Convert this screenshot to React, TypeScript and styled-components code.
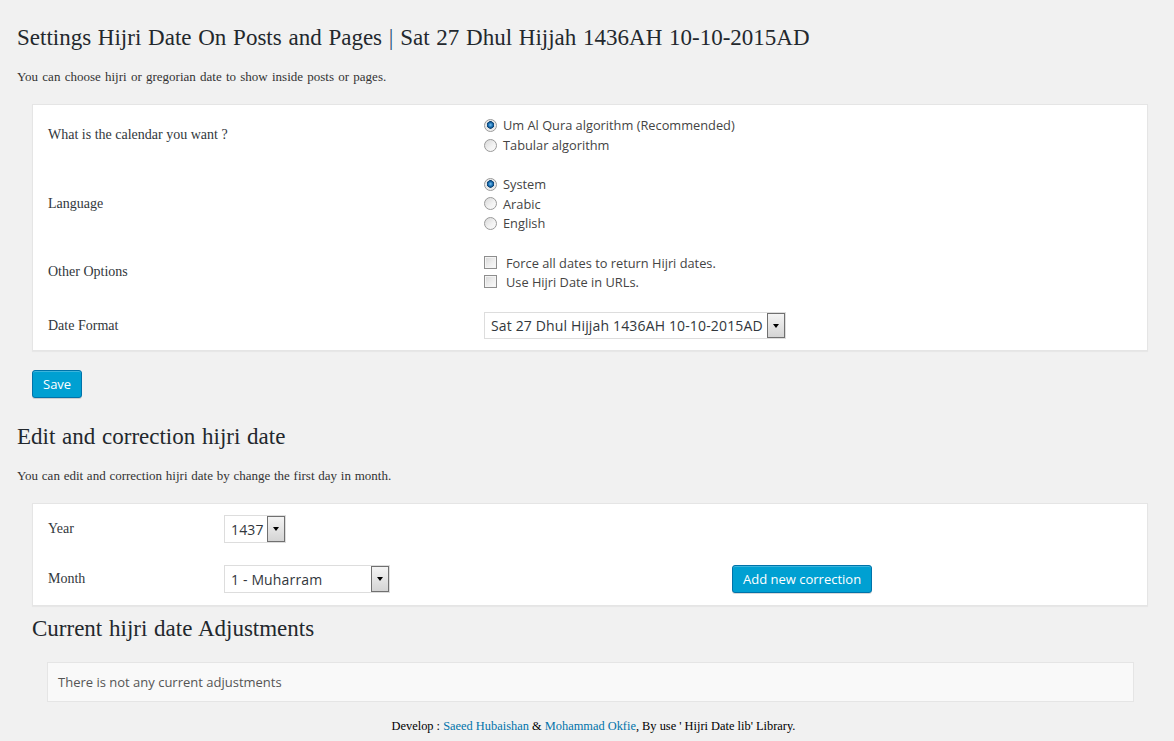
import React from "react";
import styled, { createGlobalStyle } from "styled-components";

// WordPress-style admin settings page for the hijri date plugin

const GlobalStyle = createGlobalStyle`
    html, body {
        margin: 0;
        padding: 0;
        background: #f1f1f1;
    }
    body {
        font-family: "Liberation Serif", "Times New Roman", serif;
        color: #23282d;
    }
`;

const Page = styled.div`
    padding: 23px 26px 20px 17px;
    min-height: 741px;
    box-sizing: border-box;
`;

const Title = styled.h2<{ indent?: number; top?: number }>`
    margin: ${({ top }) => top ?? 0}px 0 0 ${({ indent }) => indent ?? 0}px;
    font-weight: normal;
    font-size: 23px;
    line-height: 29px;
    word-spacing: 1px;
    color: #23282d;
`;

const Pipe = styled.span`
    color: #2a4f78;
`;

const Description = styled.p<{ spacing?: number }>`
    margin: 16px 0 0;
    font-size: 13px;
    line-height: 18px;
    word-spacing: ${({ spacing }) => spacing ?? 1}px;
    color: #333;
`;

const Card = styled.div<{ top: number }>`
    margin: ${({ top }) => top}px 0 0 15px;
    background: #fff;
    border: 1px solid #e5e5e5;
    box-shadow: 0 1px 1px rgba(0, 0, 0, 0.04);
`;

const SettingsTable = styled.div`
    padding: 0 15px;
`;

const SettingRow = styled.div<{ pad: string }>`
    display: grid;
    grid-template-columns: 436px 1fr;
    align-items: center;
    padding: ${({ pad }) => pad};
`;

const Label = styled.div`
    font-size: 14px;
    color: #32373c;
`;

const OptionList = styled.div`
    display: flex;
    flex-direction: column;
`;

const Option = styled.label<{ lineHeight: number }>`
    display: flex;
    align-items: center;
    height: ${({ lineHeight }) => lineHeight}px;
    font-family: "Open Sans", "Noto Sans", sans-serif;
    font-size: 12.8px;
    color: #444;
`;

const Radio = styled.span<{ checked?: boolean }>`
    width: 11px;
    height: 11px;
    border-radius: 50%;
    border: 1px solid #9a9a9a;
    margin-right: 6px;
    box-sizing: content-box;
    background: ${({ checked }) =>
        checked
            ? "radial-gradient(circle at 50% 45%, #7ec4ef 0, #1f74b8 2px, #0b3f6e 3.5px, #e8e8e8 4px, #f6f6f6 100%)"
            : "linear-gradient(135deg, #d8d8d8 0%, #f3f3f3 60%, #fafafa 100%)"};
`;

const Checkbox = styled.span`
    width: 11px;
    height: 11px;
    border: 1px solid #8e8e8e;
    margin-right: 9px;
    box-sizing: content-box;
    background: linear-gradient(135deg, #d6d6d6 0%, #eeeeee 55%, #fbfbfb 100%);
    box-shadow: inset 0 0 0 1px #f4f4f4;
`;

const SelectBox = styled.div<{ width: number; height: number }>`
    display: flex;
    align-items: stretch;
    width: ${({ width }) => width}px;
    height: ${({ height }) => height}px;
    border: 1px solid #ddd;
    box-sizing: border-box;
    background: #fff;
    font-family: "Open Sans", "Noto Sans", sans-serif;
    font-size: 14px;
    letter-spacing: 0.15px;
    color: #32373c;
`;

const SelectValue = styled.div`
    flex: 1;
    display: flex;
    align-items: center;
    padding-left: 6px;
    white-space: nowrap;
    overflow: hidden;
`;

const SelectArrow = styled.div`
    width: 16px;
    border: 1px solid #707070;
    background: linear-gradient(#f4f4f4, #d4d4d4);
    display: flex;
    align-items: center;
    justify-content: center;

    &::after {
        content: "";
        border-left: 3.5px solid transparent;
        border-right: 3.5px solid transparent;
        border-top: 4px solid #000;
    }
`;

const Button = styled.button<{ top?: number; left?: number }>`
    justify-self: start;
    margin: ${({ top }) => top ?? 0}px 0 0 ${({ left }) => left ?? 0}px;
    height: 28px;
    padding: 0 10px;
    background: #00a0d2;
    border: 1px solid #0073aa;
    border-radius: 3px;
    box-shadow: inset 0 1px 0 rgba(120, 200, 230, 0.5), 0 1px 0 rgba(0, 0, 0, 0.15);
    color: #fff;
    font-family: "Open Sans", "Noto Sans", sans-serif;
    font-size: 13px;
    cursor: pointer;
`;

const CorrectionTable = styled.div`
    padding: 11px 15px 12px;
    display: grid;
    grid-template-columns: 176px 508px auto;
    row-gap: 22px;
    align-items: center;
`;

const EmptyBox = styled.div`
    margin: 19px 14px 0 30px;
    height: 40px;
    box-sizing: border-box;
    display: flex;
    align-items: center;
    padding-left: 10px;
    background: #f9f9f9;
    border: 1px solid #e5e5e5;
    font-family: "Open Sans", "Noto Sans", sans-serif;
    font-size: 13px;
    color: #555;
`;

const Footer = styled.div`
    margin-top: 15px;
    padding-left: 22px;
    text-align: center;
    font-size: 12.4px;
    line-height: 18px;
    color: #000;

    a {
        color: #0073aa;
        text-decoration: none;
    }
`;

const Select: React.FC<{ value: string; width: number; height: number }> = ({
    value,
    width,
    height,
}) => (
    <SelectBox width={width} height={height}>
        <SelectValue>{value}</SelectValue>
        <SelectArrow />
    </SelectBox>
);

const App: React.FC = () => {
    return (
        <>
            <GlobalStyle />
            <Page>
                <Title>
                    Settings Hijri Date On Posts and Pages <Pipe>|</Pipe> Sat 27 Dhul
                    Hijjah 1436AH 10-10-2015AD
                </Title>
                <Description>
                    You can choose hijri or gregorian date to show inside posts or pages.
                </Description>

                <Card top={18}>
                    <SettingsTable>
                        <SettingRow pad="10px 0">
                            <Label>What is the calendar you want ?</Label>
                            <OptionList>
                                <Option lineHeight={20}>
                                    <Radio checked />
                                    Um Al Qura algorithm (Recommended)
                                </Option>
                                <Option lineHeight={20}>
                                    <Radio />
                                    Tabular algorithm
                                </Option>
                            </OptionList>
                        </SettingRow>
                        <SettingRow pad="9px 0 10px">
                            <Label>Language</Label>
                            <OptionList>
                                <Option lineHeight={20}>
                                    <Radio checked />
                                    System
                                </Option>
                                <Option lineHeight={19}>
                                    <Radio />
                                    Arabic
                                </Option>
                                <Option lineHeight={20}>
                                    <Radio />
                                    English
                                </Option>
                            </OptionList>
                        </SettingRow>
                        <SettingRow pad="10px 0 9px">
                            <Label>Other Options</Label>
                            <OptionList>
                                <Option lineHeight={19}>
                                    <Checkbox />
                                    Force all dates to return Hijri dates.
                                </Option>
                                <Option lineHeight={19}>
                                    <Checkbox />
                                    Use Hijri Date in URLs.
                                </Option>
                            </OptionList>
                        </SettingRow>
                        <SettingRow pad="12px 0 11px">
                            <Label>Date Format</Label>
                            <Select
                                value="Sat 27 Dhul Hijjah 1436AH 10-10-2015AD"
                                width={302}
                                height={27}
                            />
                        </SettingRow>
                    </SettingsTable>
                </Card>

                <Button top={19} left={15}>
                    Save
                </Button>

                <Title top={24}>Edit and correction hijri date</Title>
                <Description spacing={0.5}>
                    You can edit and correction hijri date by change the first day in month.
                </Description>

                <Card top={18}>
                    <CorrectionTable>
                        <Label>Year</Label>
                        <Select value="1437" width={62} height={28} />
                        <span />
                        <Label>Month</Label>
                        <Select value="1 - Muharram" width={166} height={28} />
                        <Button>Add new correction</Button>
                    </CorrectionTable>
                </Card>

                <Title top={8} indent={15}>
                    Current hijri date Adjustments
                </Title>
                <EmptyBox>There is not any current adjustments</EmptyBox>

                <Footer>
                    Develop : <a href="#">Saeed Hubaishan</a> &amp;{" "}
                    <a href="#">Mohammad Okfie</a>, By use ' Hijri Date lib' Library.
                </Footer>
            </Page>
        </>
    );
};

export default App;
